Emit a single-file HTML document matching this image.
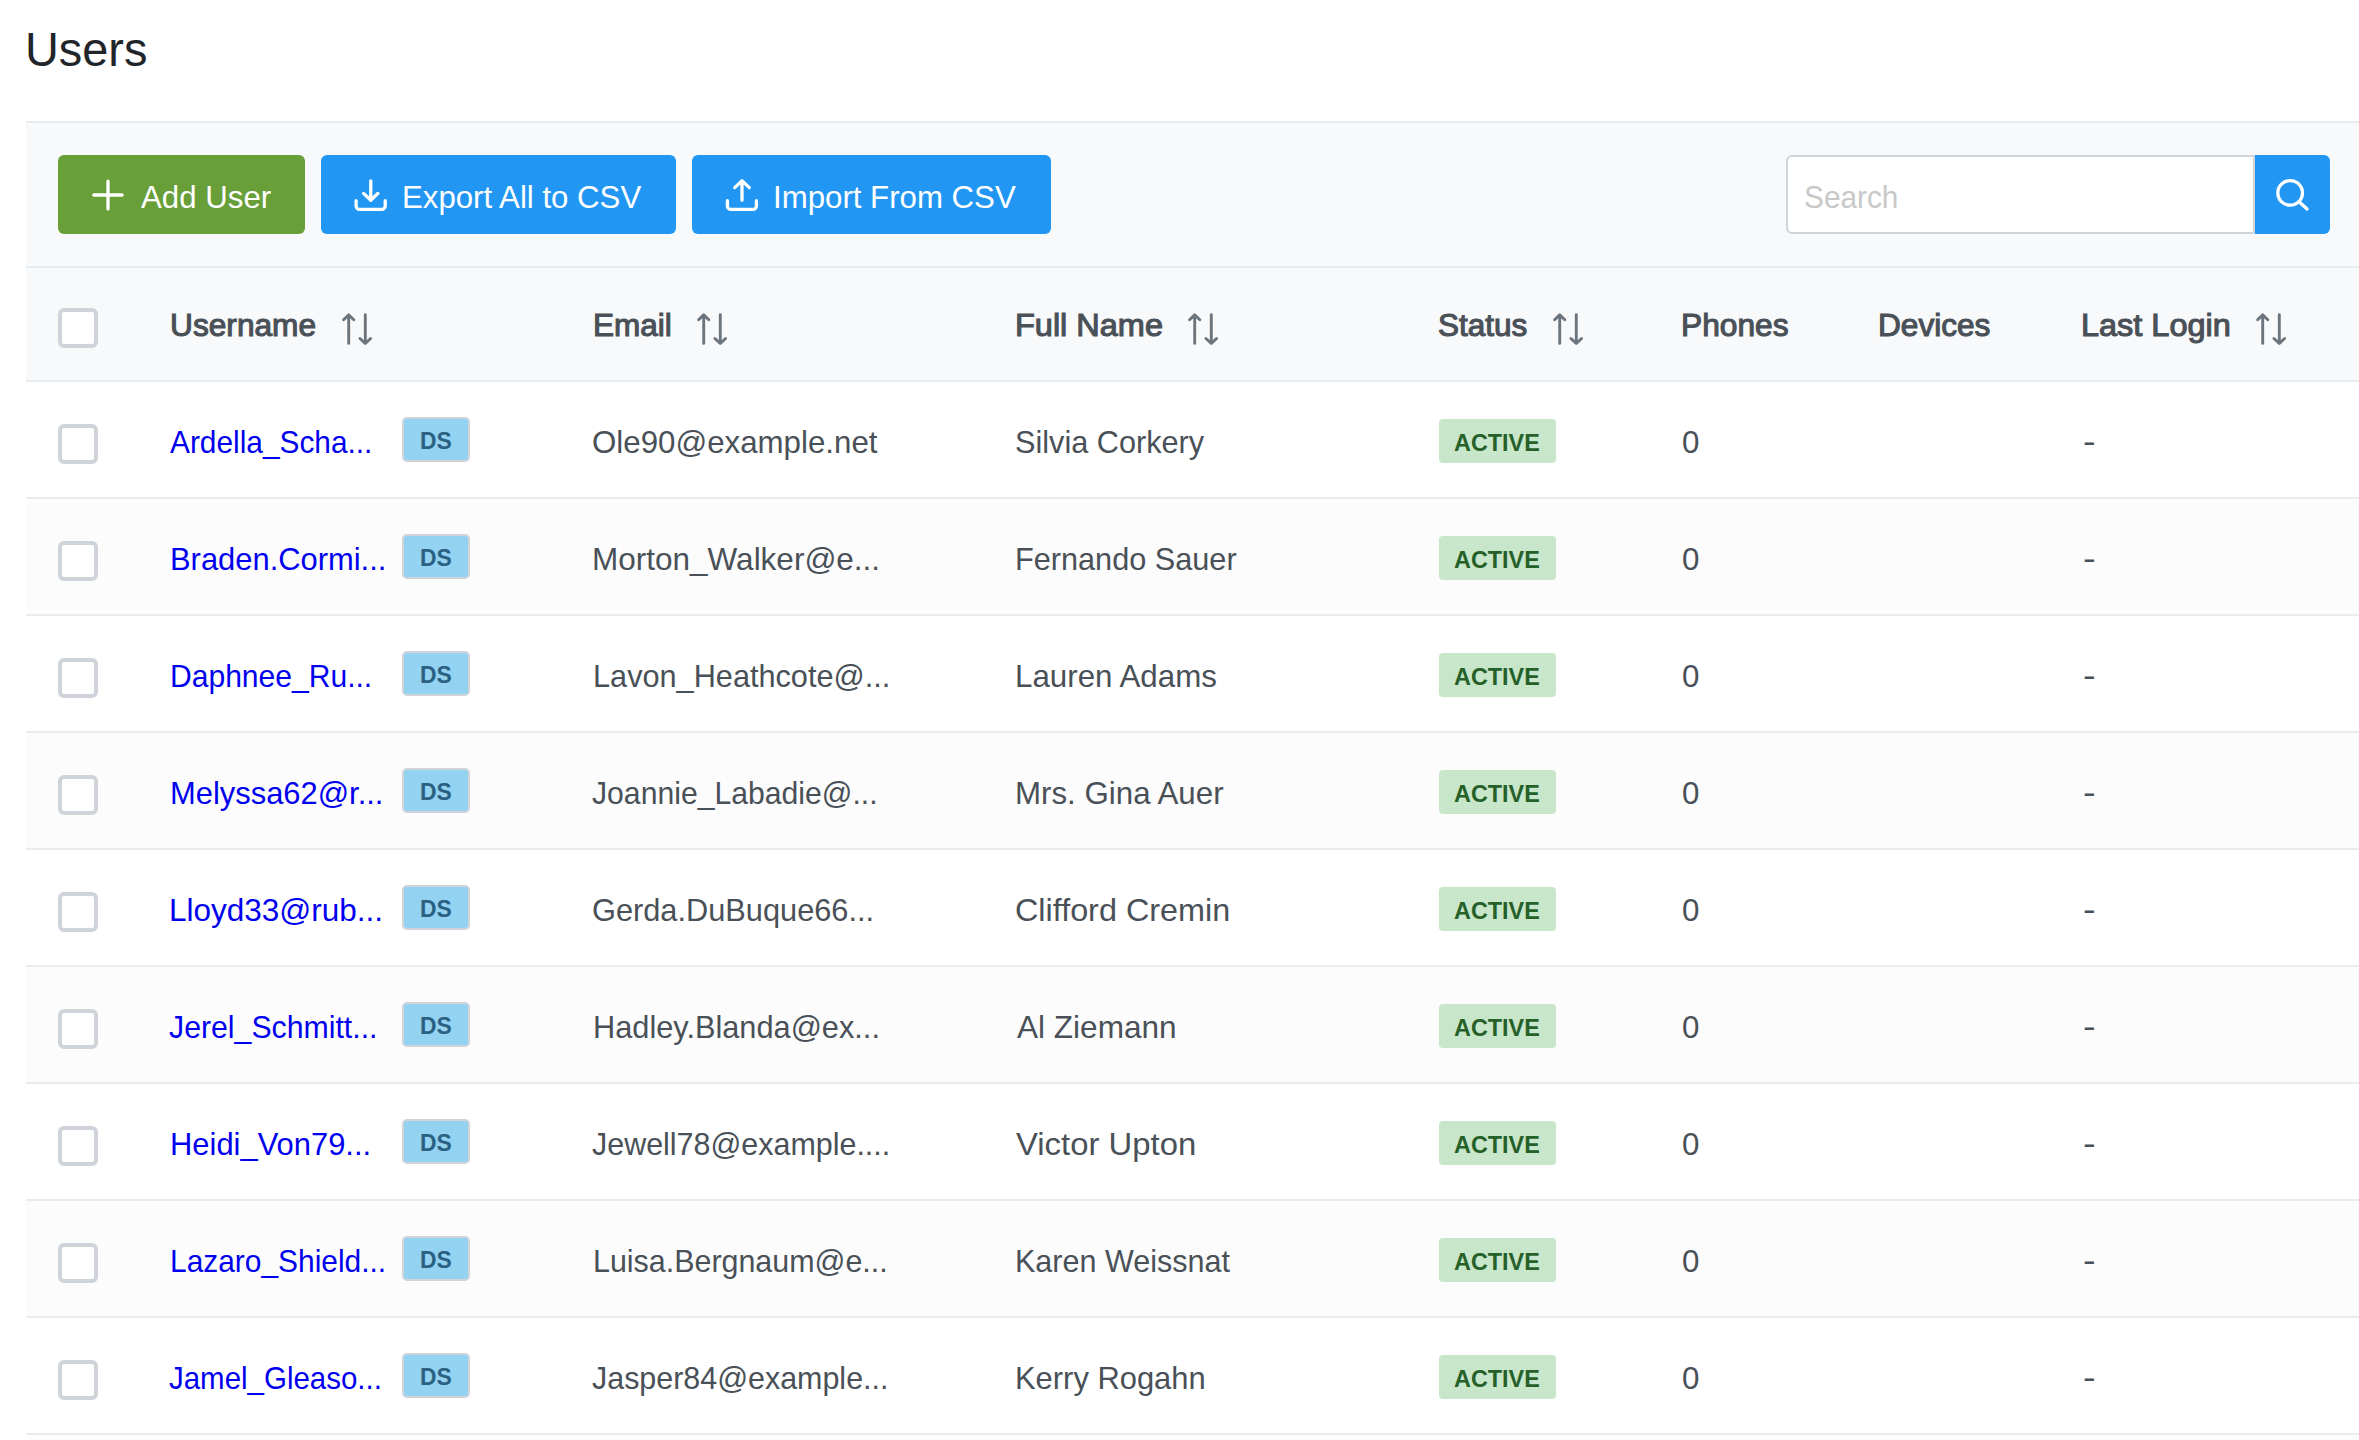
<!DOCTYPE html>
<html lang="en"><head><meta charset="utf-8"><title>Users</title>
<style>
*{box-sizing:border-box;margin:0;padding:0}
html,body{width:2359px;height:1440px;overflow:hidden;background:#fff}
body{font-family:"Liberation Sans",sans-serif;color:#495057;position:relative}
.t{position:absolute;display:block;white-space:nowrap;transform-origin:0 50%;text-decoration:none;font-style:normal}
h1.t{font-weight:400}
.card{position:absolute;left:26px;top:121px;width:2400px;height:1400px}
.toolbar{position:absolute;left:0;top:0;width:100%;height:147px;background:#f8f9fa;border-top:2px solid #e9ecef;border-bottom:2px solid #e9ecef}
.thead{position:absolute;left:0;top:147px;width:100%;height:114px;background:#f8f9fa;border-bottom:2px solid #e9ecef}
.row{position:absolute;left:0;width:100%;height:117px;background:#fff;border-bottom:2px solid #e9ecef}
.row.alt{background:#fcfcfc}
.th,.td{position:absolute;top:0;height:100%}
.btn{position:absolute;top:32px;height:79px;border:0;border-radius:6px;background:#2196f3;font:inherit;display:block}
.btn.green{background:#689f38}
.btn svg{position:absolute;left:0;top:0}
.search{position:absolute;left:1760.25px;top:32px;width:543.75px;height:79px}
.input{position:absolute;left:0;top:0;width:468.5px;height:79px;background:#fff;border:2px solid #ced4da;border-radius:6px 0 0 6px}
.sbtn{position:absolute;left:468.5px;top:0;width:75.25px;height:79px;border:0;background:#2196f3;border-radius:0 6px 6px 0;display:block}
.sbtn svg{position:absolute;left:0;top:0}
.cb{position:absolute;left:32px;width:40px;height:40px;border:4px solid #ced4da;border-radius:6px;background:#fff}
.sort{position:absolute;top:42.15px}
.ds{position:absolute;top:35px;width:68px;height:45px;border:2px solid #ced4da;border-radius:5px;background:#93d2f0}
.act{position:absolute;top:37px;width:117px;height:44px;border-radius:4px;background:#c8e6c9}
</style></head><body>
<h1 class="t " style="left:25.34px;top:24.91px;font-size:49px;line-height:49px;font-weight:400;color:#212529;transform:scaleX(0.9566)">Users</h1>
<div class="card">
<div class="toolbar">
<button class="btn green" style="left:32px;width:247px"><svg width="247" height="79" viewBox="58 155 247 79"><path d="M108 181.1v27.8M93.8 195h28.3" fill="none" stroke="#fff" stroke-width="3.3" stroke-linecap="round"/></svg><span class="t " style="left:82.94px;top:26.21px;font-size:32px;line-height:32px;font-weight:400;color:#ffffff;transform:scaleX(0.9760)">Add User</span></button>
<button class="btn" style="left:295px;width:355px"><svg width="355" height="79" viewBox="321 155 355 79"><g fill="none" stroke="#fff" stroke-width="3.3" stroke-linecap="round" stroke-linejoin="round"><path d="M370.75 180.9v19.2M363.6 193.4l7.15 6.9 7.15-6.9"/><path d="M356.1 200.7v5.2a3.5 3.5 0 0 0 3.5 3.5h22.1a3.5 3.5 0 0 0 3.5-3.5v-5.2"/></g></svg><span class="t " style="left:80.80px;top:26.21px;font-size:32px;line-height:32px;font-weight:400;color:#ffffff;transform:scaleX(0.9746)">Export All to CSV</span></button>
<button class="btn" style="left:666px;width:359px"><svg width="359" height="79" viewBox="692 155 359 79"><g fill="none" stroke="#fff" stroke-width="3.3" stroke-linecap="round" stroke-linejoin="round"><path d="M742 200.2V180.8M734.7 187.6l7.3-6.9 7.3 6.9"/><path d="M727.4 200.7v5.2a3.5 3.5 0 0 0 3.5 3.5h22a3.5 3.5 0 0 0 3.5-3.5v-5.2"/></g></svg><span class="t " style="left:81.03px;top:26.21px;font-size:32px;line-height:32px;font-weight:400;color:#ffffff;transform:scaleX(0.9752)">Import From CSV</span></button>
<div class="search"><div class="input"><span class="t " style="left:15.46px;top:24.11px;font-size:32px;line-height:32px;font-weight:400;color:#c8c8c8;transform:scaleX(0.9312)">Search</span></div><button class="sbtn"><svg width="76" height="79" viewBox="2254.75 155 76 79"><g fill="none" stroke="#fff" stroke-width="3.3" stroke-linecap="round"><circle cx="2289.9" cy="192.9" r="12.3"/><path d="M2298.8 201.7l8 7.2"/></g></svg></button></div>
</div>
<div class="thead">
<div class="th" style="left:0px;width:113px"><div class="cb" style="top:40px"></div></div>
<div class="th" style="left:113px;width:422px"><span class="t " style="left:30.53px;top:42.05px;font-size:31px;line-height:31px;font-weight:400;color:#495057;transform:scaleX(1.0218);-webkit-text-stroke:1.1px #495057">Username</span><svg class="sort" style="left:200.95px" width="34" height="36" viewBox="0 0 34 36"><g fill="none" stroke="#6c757d" stroke-width="2.9" stroke-linecap="round" stroke-linejoin="round"><path d="M8.7 33.4V4.9M3.6 9.8l5.1-4.9 5.1 4.9"/><path d="M25.3 4.8v28.5M19.9 28.5l5.4 4.9 5.3-4.9"/></g></svg></div>
<div class="th" style="left:535px;width:423px"><span class="t " style="left:31.81px;top:42.05px;font-size:31px;line-height:31px;font-weight:400;color:#495057;transform:scaleX(1.0165);-webkit-text-stroke:1.1px #495057">Email</span><svg class="sort" style="left:133.95px" width="34" height="36" viewBox="0 0 34 36"><g fill="none" stroke="#6c757d" stroke-width="2.9" stroke-linecap="round" stroke-linejoin="round"><path d="M8.7 33.4V4.9M3.6 9.8l5.1-4.9 5.1 4.9"/><path d="M25.3 4.8v28.5M19.9 28.5l5.4 4.9 5.3-4.9"/></g></svg></div>
<div class="th" style="left:958px;width:423px"><span class="t " style="left:31.06px;top:42.05px;font-size:31px;line-height:31px;font-weight:400;color:#495057;transform:scaleX(1.0476);-webkit-text-stroke:1.1px #495057">Full Name</span><svg class="sort" style="left:201.85px" width="34" height="36" viewBox="0 0 34 36"><g fill="none" stroke="#6c757d" stroke-width="2.9" stroke-linecap="round" stroke-linejoin="round"><path d="M8.7 33.4V4.9M3.6 9.8l5.1-4.9 5.1 4.9"/><path d="M25.3 4.8v28.5M19.9 28.5l5.4 4.9 5.3-4.9"/></g></svg></div>
<div class="th" style="left:1381px;width:244px"><span class="t " style="left:31.36px;top:42.05px;font-size:31px;line-height:31px;font-weight:400;color:#495057;transform:scaleX(1.0170);-webkit-text-stroke:1.1px #495057">Status</span><svg class="sort" style="left:143.95px" width="34" height="36" viewBox="0 0 34 36"><g fill="none" stroke="#6c757d" stroke-width="2.9" stroke-linecap="round" stroke-linejoin="round"><path d="M8.7 33.4V4.9M3.6 9.8l5.1-4.9 5.1 4.9"/><path d="M25.3 4.8v28.5M19.9 28.5l5.4 4.9 5.3-4.9"/></g></svg></div>
<div class="th" style="left:1625px;width:197px"><span class="t " style="left:29.80px;top:42.05px;font-size:31px;line-height:31px;font-weight:400;color:#495057;transform:scaleX(1.0235);-webkit-text-stroke:1.1px #495057">Phones</span></div>
<div class="th" style="left:1822px;width:203px"><span class="t " style="left:29.91px;top:42.05px;font-size:31px;line-height:31px;font-weight:400;color:#495057;transform:scaleX(1.0196);-webkit-text-stroke:1.1px #495057">Devices</span></div>
<div class="th" style="left:2025px;width:375px"><span class="t " style="left:29.86px;top:42.05px;font-size:31px;line-height:31px;font-weight:400;color:#495057;transform:scaleX(1.0467);-webkit-text-stroke:1.1px #495057">Last Login</span><svg class="sort" style="left:202.85px" width="34" height="36" viewBox="0 0 34 36"><g fill="none" stroke="#6c757d" stroke-width="2.9" stroke-linecap="round" stroke-linejoin="round"><path d="M8.7 33.4V4.9M3.6 9.8l5.1-4.9 5.1 4.9"/><path d="M25.3 4.8v28.5M19.9 28.5l5.4 4.9 5.3-4.9"/></g></svg></div>
</div>
<div class="row" style="top:261px">
<div class="td" style="left:0px;width:113px"><div class="cb" style="top:42px"></div></div>
<div class="td" style="left:113px;width:422px"><a class="t " href="#" style="left:31.44px;top:44.01px;font-size:32px;line-height:32px;font-weight:400;color:#0000ee;transform:scaleX(0.9325)">Ardella_Scha...</a><span class="ds" style="left:263px"><span class="t " style="left:15.65px;top:10.69px;font-size:23.4px;line-height:23.4px;font-weight:700;color:#2a6182;transform:scaleX(0.9768)">DS</span></span></div>
<div class="td" style="left:535px;width:423px"><span class="t " style="left:31.07px;top:44.01px;font-size:32px;line-height:32px;font-weight:400;color:#495057;transform:scaleX(0.9770)">Ole90@example.net</span></div>
<div class="td" style="left:958px;width:423px"><span class="t " style="left:31.37px;top:44.01px;font-size:32px;line-height:32px;font-weight:400;color:#495057;transform:scaleX(0.9584)">Silvia Corkery</span></div>
<div class="td" style="left:1381px;width:244px"><span class="act" style="left:32px"><span class="t " style="left:15.23px;top:12.35px;font-size:23.8px;line-height:23.8px;font-weight:700;color:#256029;transform:scaleX(0.9828)">ACTIVE</span></span></div>
<div class="td" style="left:1625px;width:197px"><span class="t " style="left:30.88px;top:44.01px;font-size:32px;line-height:32px;font-weight:400;color:#495057;transform:scaleX(0.9786)">0</span></div>
<div class="td" style="left:1822px;width:203px"></div>
<div class="td" style="left:2025px;width:375px"><span class="t " style="left:31.64px;top:42.91px;font-size:32px;line-height:32px;font-weight:400;color:#495057;transform:scaleX(1.1845)">-</span></div>
</div>
<div class="row alt" style="top:378px">
<div class="td" style="left:0px;width:113px"><div class="cb" style="top:42px"></div></div>
<div class="td" style="left:113px;width:422px"><a class="t " href="#" style="left:30.52px;top:44.01px;font-size:32px;line-height:32px;font-weight:400;color:#0000ee;transform:scaleX(0.9655)">Braden.Cormi...</a><span class="ds" style="left:263px"><span class="t " style="left:15.65px;top:10.69px;font-size:23.4px;line-height:23.4px;font-weight:700;color:#2a6182;transform:scaleX(0.9768)">DS</span></span></div>
<div class="td" style="left:535px;width:423px"><span class="t " style="left:31.48px;top:44.01px;font-size:32px;line-height:32px;font-weight:400;color:#495057;transform:scaleX(0.9843)">Morton_Walker@e...</span></div>
<div class="td" style="left:958px;width:423px"><span class="t " style="left:31.24px;top:44.01px;font-size:32px;line-height:32px;font-weight:400;color:#495057;transform:scaleX(0.9583)">Fernando Sauer</span></div>
<div class="td" style="left:1381px;width:244px"><span class="act" style="left:32px"><span class="t " style="left:15.23px;top:12.35px;font-size:23.8px;line-height:23.8px;font-weight:700;color:#256029;transform:scaleX(0.9828)">ACTIVE</span></span></div>
<div class="td" style="left:1625px;width:197px"><span class="t " style="left:30.88px;top:44.01px;font-size:32px;line-height:32px;font-weight:400;color:#495057;transform:scaleX(0.9786)">0</span></div>
<div class="td" style="left:1822px;width:203px"></div>
<div class="td" style="left:2025px;width:375px"><span class="t " style="left:31.64px;top:42.91px;font-size:32px;line-height:32px;font-weight:400;color:#495057;transform:scaleX(1.1845)">-</span></div>
</div>
<div class="row" style="top:495px">
<div class="td" style="left:0px;width:113px"><div class="cb" style="top:42px"></div></div>
<div class="td" style="left:113px;width:422px"><a class="t " href="#" style="left:30.59px;top:44.01px;font-size:32px;line-height:32px;font-weight:400;color:#0000ee;transform:scaleX(0.9394)">Daphnee_Ru...</a><span class="ds" style="left:263px"><span class="t " style="left:15.65px;top:10.69px;font-size:23.4px;line-height:23.4px;font-weight:700;color:#2a6182;transform:scaleX(0.9768)">DS</span></span></div>
<div class="td" style="left:535px;width:423px"><span class="t " style="left:31.54px;top:44.01px;font-size:32px;line-height:32px;font-weight:400;color:#495057;transform:scaleX(0.9588)">Lavon_Heathcote@...</span></div>
<div class="td" style="left:958px;width:423px"><span class="t " style="left:31.19px;top:44.01px;font-size:32px;line-height:32px;font-weight:400;color:#495057;transform:scaleX(0.9782)">Lauren Adams</span></div>
<div class="td" style="left:1381px;width:244px"><span class="act" style="left:32px"><span class="t " style="left:15.23px;top:12.35px;font-size:23.8px;line-height:23.8px;font-weight:700;color:#256029;transform:scaleX(0.9828)">ACTIVE</span></span></div>
<div class="td" style="left:1625px;width:197px"><span class="t " style="left:30.88px;top:44.01px;font-size:32px;line-height:32px;font-weight:400;color:#495057;transform:scaleX(0.9786)">0</span></div>
<div class="td" style="left:1822px;width:203px"></div>
<div class="td" style="left:2025px;width:375px"><span class="t " style="left:31.64px;top:42.91px;font-size:32px;line-height:32px;font-weight:400;color:#495057;transform:scaleX(1.1845)">-</span></div>
</div>
<div class="row alt" style="top:612px">
<div class="td" style="left:0px;width:113px"><div class="cb" style="top:42px"></div></div>
<div class="td" style="left:113px;width:422px"><a class="t " href="#" style="left:30.52px;top:44.01px;font-size:32px;line-height:32px;font-weight:400;color:#0000ee;transform:scaleX(0.9656)">Melyssa62@r...</a><span class="ds" style="left:263px"><span class="t " style="left:15.65px;top:10.69px;font-size:23.4px;line-height:23.4px;font-weight:700;color:#2a6182;transform:scaleX(0.9768)">DS</span></span></div>
<div class="td" style="left:535px;width:423px"><span class="t " style="left:31.43px;top:44.01px;font-size:32px;line-height:32px;font-weight:400;color:#495057;transform:scaleX(0.9426)">Joannie_Labadie@...</span></div>
<div class="td" style="left:958px;width:423px"><span class="t " style="left:31.19px;top:44.01px;font-size:32px;line-height:32px;font-weight:400;color:#495057;transform:scaleX(0.9773)">Mrs. Gina Auer</span></div>
<div class="td" style="left:1381px;width:244px"><span class="act" style="left:32px"><span class="t " style="left:15.23px;top:12.35px;font-size:23.8px;line-height:23.8px;font-weight:700;color:#256029;transform:scaleX(0.9828)">ACTIVE</span></span></div>
<div class="td" style="left:1625px;width:197px"><span class="t " style="left:30.88px;top:44.01px;font-size:32px;line-height:32px;font-weight:400;color:#495057;transform:scaleX(0.9786)">0</span></div>
<div class="td" style="left:1822px;width:203px"></div>
<div class="td" style="left:2025px;width:375px"><span class="t " style="left:31.64px;top:42.91px;font-size:32px;line-height:32px;font-weight:400;color:#495057;transform:scaleX(1.1845)">-</span></div>
</div>
<div class="row" style="top:729px">
<div class="td" style="left:0px;width:113px"><div class="cb" style="top:42px"></div></div>
<div class="td" style="left:113px;width:422px"><a class="t " href="#" style="left:30.48px;top:44.01px;font-size:32px;line-height:32px;font-weight:400;color:#0000ee;transform:scaleX(0.9843)">Lloyd33@rub...</a><span class="ds" style="left:263px"><span class="t " style="left:15.65px;top:10.69px;font-size:23.4px;line-height:23.4px;font-weight:700;color:#2a6182;transform:scaleX(0.9768)">DS</span></span></div>
<div class="td" style="left:535px;width:423px"><span class="t " style="left:31.00px;top:44.01px;font-size:32px;line-height:32px;font-weight:400;color:#495057;transform:scaleX(0.9610)">Gerda.DuBuque66...</span></div>
<div class="td" style="left:958px;width:423px"><span class="t " style="left:31.12px;top:44.01px;font-size:32px;line-height:32px;font-weight:400;color:#495057;transform:scaleX(1.0110)">Clifford Cremin</span></div>
<div class="td" style="left:1381px;width:244px"><span class="act" style="left:32px"><span class="t " style="left:15.23px;top:12.35px;font-size:23.8px;line-height:23.8px;font-weight:700;color:#256029;transform:scaleX(0.9828)">ACTIVE</span></span></div>
<div class="td" style="left:1625px;width:197px"><span class="t " style="left:30.88px;top:44.01px;font-size:32px;line-height:32px;font-weight:400;color:#495057;transform:scaleX(0.9786)">0</span></div>
<div class="td" style="left:1822px;width:203px"></div>
<div class="td" style="left:2025px;width:375px"><span class="t " style="left:31.64px;top:42.91px;font-size:32px;line-height:32px;font-weight:400;color:#495057;transform:scaleX(1.1845)">-</span></div>
</div>
<div class="row alt" style="top:846px">
<div class="td" style="left:0px;width:113px"><div class="cb" style="top:42px"></div></div>
<div class="td" style="left:113px;width:422px"><a class="t " href="#" style="left:30.43px;top:44.01px;font-size:32px;line-height:32px;font-weight:400;color:#0000ee;transform:scaleX(0.9454)">Jerel_Schmitt...</a><span class="ds" style="left:263px"><span class="t " style="left:15.65px;top:10.69px;font-size:23.4px;line-height:23.4px;font-weight:700;color:#2a6182;transform:scaleX(0.9768)">DS</span></span></div>
<div class="td" style="left:535px;width:423px"><span class="t " style="left:31.54px;top:44.01px;font-size:32px;line-height:32px;font-weight:400;color:#495057;transform:scaleX(0.9605)">Hadley.Blanda@ex...</span></div>
<div class="td" style="left:958px;width:423px"><span class="t " style="left:32.74px;top:44.01px;font-size:32px;line-height:32px;font-weight:400;color:#495057;transform:scaleX(0.9862)">Al Ziemann</span></div>
<div class="td" style="left:1381px;width:244px"><span class="act" style="left:32px"><span class="t " style="left:15.23px;top:12.35px;font-size:23.8px;line-height:23.8px;font-weight:700;color:#256029;transform:scaleX(0.9828)">ACTIVE</span></span></div>
<div class="td" style="left:1625px;width:197px"><span class="t " style="left:30.88px;top:44.01px;font-size:32px;line-height:32px;font-weight:400;color:#495057;transform:scaleX(0.9786)">0</span></div>
<div class="td" style="left:1822px;width:203px"></div>
<div class="td" style="left:2025px;width:375px"><span class="t " style="left:31.64px;top:42.91px;font-size:32px;line-height:32px;font-weight:400;color:#495057;transform:scaleX(1.1845)">-</span></div>
</div>
<div class="row" style="top:963px">
<div class="td" style="left:0px;width:113px"><div class="cb" style="top:42px"></div></div>
<div class="td" style="left:113px;width:422px"><a class="t " href="#" style="left:30.52px;top:44.01px;font-size:32px;line-height:32px;font-weight:400;color:#0000ee;transform:scaleX(0.9662)">Heidi_Von79...</a><span class="ds" style="left:263px"><span class="t " style="left:15.65px;top:10.69px;font-size:23.4px;line-height:23.4px;font-weight:700;color:#2a6182;transform:scaleX(0.9768)">DS</span></span></div>
<div class="td" style="left:535px;width:423px"><span class="t " style="left:31.42px;top:44.01px;font-size:32px;line-height:32px;font-weight:400;color:#495057;transform:scaleX(0.9512)">Jewell78@example....</span></div>
<div class="td" style="left:958px;width:423px"><span class="t " style="left:32.45px;top:44.01px;font-size:32px;line-height:32px;font-weight:400;color:#495057;transform:scaleX(1.0268)">Victor Upton</span></div>
<div class="td" style="left:1381px;width:244px"><span class="act" style="left:32px"><span class="t " style="left:15.23px;top:12.35px;font-size:23.8px;line-height:23.8px;font-weight:700;color:#256029;transform:scaleX(0.9828)">ACTIVE</span></span></div>
<div class="td" style="left:1625px;width:197px"><span class="t " style="left:30.88px;top:44.01px;font-size:32px;line-height:32px;font-weight:400;color:#495057;transform:scaleX(0.9786)">0</span></div>
<div class="td" style="left:1822px;width:203px"></div>
<div class="td" style="left:2025px;width:375px"><span class="t " style="left:31.64px;top:42.91px;font-size:32px;line-height:32px;font-weight:400;color:#495057;transform:scaleX(1.1845)">-</span></div>
</div>
<div class="row alt" style="top:1080px">
<div class="td" style="left:0px;width:113px"><div class="cb" style="top:42px"></div></div>
<div class="td" style="left:113px;width:422px"><a class="t " href="#" style="left:30.60px;top:44.01px;font-size:32px;line-height:32px;font-weight:400;color:#0000ee;transform:scaleX(0.9344)">Lazaro_Shield...</a><span class="ds" style="left:263px"><span class="t " style="left:15.65px;top:10.69px;font-size:23.4px;line-height:23.4px;font-weight:700;color:#2a6182;transform:scaleX(0.9768)">DS</span></span></div>
<div class="td" style="left:535px;width:423px"><span class="t " style="left:31.56px;top:44.01px;font-size:32px;line-height:32px;font-weight:400;color:#495057;transform:scaleX(0.9507)">Luisa.Bergnaum@e...</span></div>
<div class="td" style="left:958px;width:423px"><span class="t " style="left:31.25px;top:44.01px;font-size:32px;line-height:32px;font-weight:400;color:#495057;transform:scaleX(0.9537)">Karen Weissnat</span></div>
<div class="td" style="left:1381px;width:244px"><span class="act" style="left:32px"><span class="t " style="left:15.23px;top:12.35px;font-size:23.8px;line-height:23.8px;font-weight:700;color:#256029;transform:scaleX(0.9828)">ACTIVE</span></span></div>
<div class="td" style="left:1625px;width:197px"><span class="t " style="left:30.88px;top:44.01px;font-size:32px;line-height:32px;font-weight:400;color:#495057;transform:scaleX(0.9786)">0</span></div>
<div class="td" style="left:1822px;width:203px"></div>
<div class="td" style="left:2025px;width:375px"><span class="t " style="left:31.64px;top:42.91px;font-size:32px;line-height:32px;font-weight:400;color:#495057;transform:scaleX(1.1845)">-</span></div>
</div>
<div class="row" style="top:1197px">
<div class="td" style="left:0px;width:113px"><div class="cb" style="top:42px"></div></div>
<div class="td" style="left:113px;width:422px"><a class="t " href="#" style="left:30.44px;top:44.01px;font-size:32px;line-height:32px;font-weight:400;color:#0000ee;transform:scaleX(0.9209)">Jamel_Gleaso...</a><span class="ds" style="left:263px"><span class="t " style="left:15.65px;top:10.69px;font-size:23.4px;line-height:23.4px;font-weight:700;color:#2a6182;transform:scaleX(0.9768)">DS</span></span></div>
<div class="td" style="left:535px;width:423px"><span class="t " style="left:31.42px;top:44.01px;font-size:32px;line-height:32px;font-weight:400;color:#495057;transform:scaleX(0.9508)">Jasper84@example...</span></div>
<div class="td" style="left:958px;width:423px"><span class="t " style="left:31.22px;top:44.01px;font-size:32px;line-height:32px;font-weight:400;color:#495057;transform:scaleX(0.9657)">Kerry Rogahn</span></div>
<div class="td" style="left:1381px;width:244px"><span class="act" style="left:32px"><span class="t " style="left:15.23px;top:12.35px;font-size:23.8px;line-height:23.8px;font-weight:700;color:#256029;transform:scaleX(0.9828)">ACTIVE</span></span></div>
<div class="td" style="left:1625px;width:197px"><span class="t " style="left:30.88px;top:44.01px;font-size:32px;line-height:32px;font-weight:400;color:#495057;transform:scaleX(0.9786)">0</span></div>
<div class="td" style="left:1822px;width:203px"></div>
<div class="td" style="left:2025px;width:375px"><span class="t " style="left:31.64px;top:42.91px;font-size:32px;line-height:32px;font-weight:400;color:#495057;transform:scaleX(1.1845)">-</span></div>
</div>
<div class="row alt" style="top:1314px"></div>
</div></body></html>
